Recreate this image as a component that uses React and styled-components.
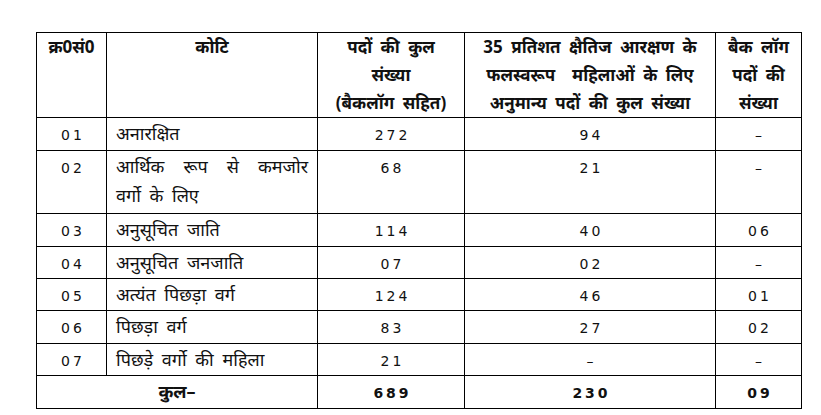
import React from "react";
import styled, { createGlobalStyle } from "styled-components";

const GlobalStyle = createGlobalStyle`
    body {
        margin: 0;
        background: #ffffff;
        font-family: "Noto Sans", "DejaVu Sans", sans-serif;
        color: #111;
    }
`;

const Page = styled.div`
    width: 821px;
    height: 415px;
    padding: 32px 0 0 36px;
    box-sizing: border-box;
`;

const Table = styled.table`
    width: 765px;
    border-collapse: collapse;
    table-layout: fixed;
    border: 1.5px solid #000;
`;

const Row = styled.tr`
    height: ${(p) => p.$h}px;
`;

const Head = styled.th`
    border: 1.5px solid #000;
    vertical-align: top;
    padding: 0 2px;
    font-size: 17px;
    font-weight: 700;
    line-height: 28px;
    word-spacing: 4px;
    text-align: center;
    white-space: nowrap;
`;

const Cell = styled.td`
    border: 1.5px solid #000;
    vertical-align: top;
    padding: 1px 9px 0;
    font-size: 18px;
    line-height: 29px;
    font-weight: ${(p) => (p.$bold ? 700 : 400)};
    text-align: ${(p) => (p.$left ? "left" : "center")};
    word-spacing: 4px;
`;

const Spread = styled.span`
    display: block;
    text-align: justify;
    text-align-last: justify;
`;

const Num = styled.span`
    letter-spacing: 3px;
    margin-right: -3px;
    font-family: "DejaVu Sans", sans-serif;
    font-size: 14px;
    line-height: 1;
`;

const rows = [
    { no: "01", name: ["अनारक्षित"], total: "272", women: "94", back: "–", h: 33 },
    { no: "02", name: ["आर्थिक रूप से कमजोर", "वर्गो के लिए"], total: "68", women: "21", back: "–", h: 63 },
    { no: "03", name: ["अनुसूचित जाति"], total: "114", women: "40", back: "06", h: 33 },
    { no: "04", name: ["अनुसूचित जनजाति"], total: "07", women: "02", back: "–", h: 32 },
    { no: "05", name: ["अत्यंत पिछड़ा वर्ग"], total: "124", women: "46", back: "01", h: 32 },
    { no: "06", name: ["पिछड़ा वर्ग"], total: "83", women: "27", back: "02", h: 33 },
    { no: "07", name: ["पिछड़े वर्गो की महिला"], total: "21", women: "–", back: "–", h: 32 },
];

const App = () => {
    return (
        <Page>
            <GlobalStyle />
            <Table>
                <colgroup>
                    <col style={{ width: 70 }} />
                    <col style={{ width: 211 }} />
                    <col style={{ width: 147 }} />
                    <col style={{ width: 251 }} />
                    <col style={{ width: 86 }} />
                </colgroup>
                <thead>
                    <Row $h={85}>
                        <Head>क्र0सं0</Head>
                        <Head>कोटि</Head>
                        <Head>
                            पदों की कुल
                            <br />
                            संख्या
                            <br />
                            (बैकलॉग सहित)
                        </Head>
                        <Head>
                            35 प्रतिशत क्षैतिज आरक्षण के
                            <br />
                            फलस्वरूप &nbsp;महिलाओं के लिए
                            <br />
                            अनुमान्य पदों की कुल संख्या
                        </Head>
                        <Head>
                            बैक लॉग
                            <br />
                            पदों की
                            <br />
                            संख्या
                        </Head>
                    </Row>
                </thead>
                <tbody>
                    {rows.map((r) => (
                        <Row key={r.no} $h={r.h}>
                            <Cell><Num>{r.no}</Num></Cell>
                            <Cell $left>
                                {r.name.length > 1 ? (
                                    <>
                                        <Spread>{r.name[0]}</Spread>
                                        {r.name[1]}
                                    </>
                                ) : (
                                    r.name[0]
                                )}
                            </Cell>
                            <Cell><Num>{r.total}</Num></Cell>
                            <Cell><Num>{r.women}</Num></Cell>
                            <Cell><Num>{r.back}</Num></Cell>
                        </Row>
                    ))}
                    <Row $h={33}>
                        <Cell colSpan={2} $bold>कुल–</Cell>
                        <Cell $bold><Num>689</Num></Cell>
                        <Cell $bold><Num>230</Num></Cell>
                        <Cell $bold><Num>09</Num></Cell>
                    </Row>
                </tbody>
            </Table>
        </Page>
    );
};

export default App;
